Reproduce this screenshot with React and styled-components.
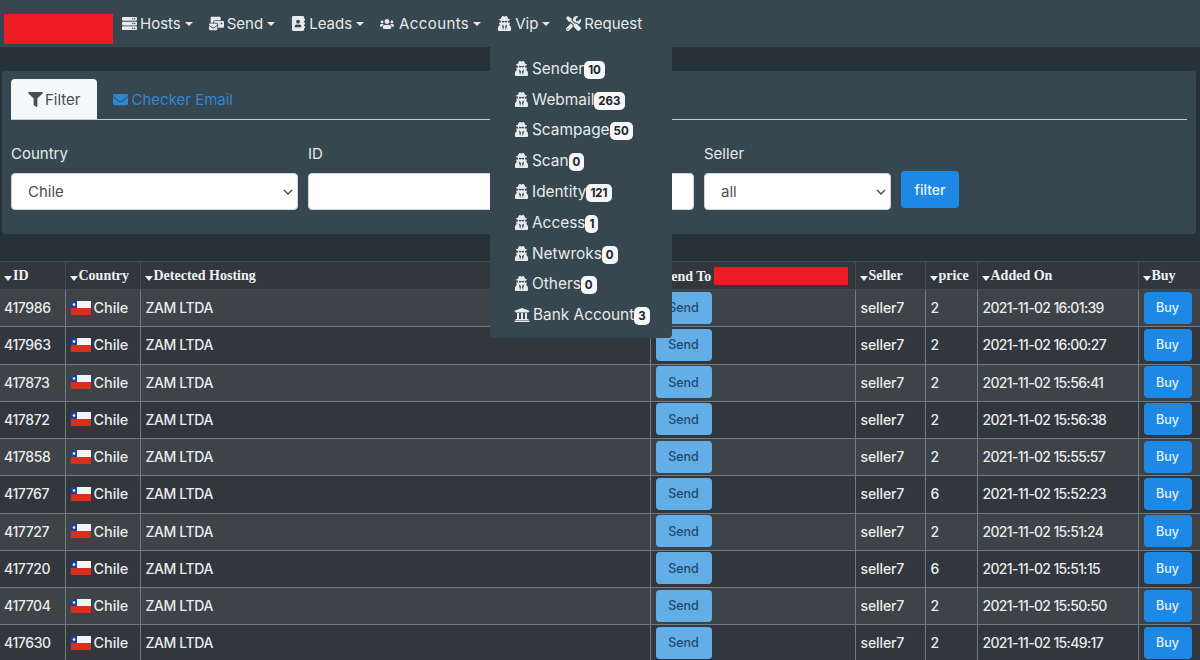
import styled, { createGlobalStyle } from 'styled-components';
import {
  FaServer, FaMailBulk, FaAddressBook, FaUsers, FaUserSecret, FaTools,
  FaFilter, FaEnvelope, FaUniversity,
} from 'react-icons/fa';

const GlobalStyle = createGlobalStyle`
  html, body {
    margin: 0;
    height: 660px;
    overflow: hidden;
    background: #263238;
    font-family: "Inter", "Open Sans", sans-serif;
  }
  * { box-sizing: border-box; }
`;

const Page = styled.div`
  position: relative;
  width: 1200px;
  height: 660px;
  overflow: hidden;
  color: #eef1f2;
`;

const Navbar = styled.nav`
  display: flex;
  align-items: center;
  height: 47px;
  padding: 0 0 0 4px;
  background: #37474f;
`;

const Logo = styled.div`
  width: 109px;
  height: 30px;
  margin: 11px 9px 0 0;
  background: #ed1c24;
`;

const NavItem = styled.a`
  display: flex;
  align-items: center;
  gap: 3px;
  margin-right: 16px;
  font-size: 15px;
  letter-spacing: ${(p) => p.$spacing || 0};
  color: #e6eaec;
  svg { height: 15px; width: auto; }
`;

const UsersIcon = styled(FaUsers)`
  && { height: 14px; margin-right: 2px; }
`;

const Caret = styled.span`
  width: 0;
  height: 0;
  margin-left: 1px;
  border-top: 4px solid #e6eaec;
  border-left: 4px solid transparent;
  border-right: 4px solid transparent;
`;

const Menu = styled.div`
  position: absolute;
  top: 46px;
  left: 490px;
  width: 182px;
  height: 292px;
  padding: 7px 0 0 24px;
  background: #37474f;
  border-radius: 0 0 4px 4px;
  z-index: 5;
`;

const MenuItem = styled.div`
  display: flex;
  align-items: center;
  height: 30.8px;
  font-size: 15.4px;
  color: #e6eaec;
  svg { height: 15px; width: auto; margin-right: 3px; }
`;

const BankIcon = styled(FaUniversity)`
  && { height: 16px; margin-right: 3px; }
`;

const Badge = styled.span`
  display: inline-block;
  margin-top: 3px;
  padding: 3px 4px;
  background: #f4f6f7;
  color: #1d2327;
  border-radius: 5px;
  font-size: 11.5px;
  font-weight: 700;
  line-height: 12px;
`;

const Card = styled.section`
  height: 163px;
  margin: 24px 4px 0 2px;
  padding: 8px 9px;
  background: #37474f;
  border-radius: 3px;
`;

const Tabs = styled.div`
  display: flex;
  height: 41px;
  border-bottom: 1px solid #c5ccd0;
`;

const Tab = styled.div`
  display: flex;
  align-items: center;
  gap: ${(p) => (p.$active ? 2 : 4)}px;
  height: 40px;
  padding: ${(p) => (p.$active ? '0 16px 0 17px' : '0 16px')};
  font-size: 15px;
  border-radius: 4px 4px 0 0;
  background: ${(p) => (p.$active ? '#f5f7f8' : 'transparent')};
  color: ${(p) => (p.$active ? '#454f54' : '#2f86d6')};
`;

const FilterRow = styled.form`
  display: flex;
  align-items: flex-end;
  gap: 10px;
  margin-top: 25px;
`;

const Field = styled.div`
  display: flex;
  flex-direction: column;
  gap: 10px;
  width: ${(p) => p.$width}px;
`;

const Label = styled.label`
  font-size: 15px;
  line-height: 18px;
  color: #e6eaec;
`;

const Select = styled.select`
  height: 37px;
  padding-left: 16px;
  appearance: none;
  font: inherit;
  font-size: 15px;
  color: #495057;
  background: #fff url("data:image/svg+xml,%3Csvg xmlns='http://www.w3.org/2000/svg' width='10' height='6'%3E%3Cpath d='M1 1l4 4 4-4' fill='none' stroke='%23444' stroke-width='1.3'/%3E%3C/svg%3E") no-repeat right 4px center;
  border: 1px solid #ced4da;
  border-radius: 4px;
`;

const Input = styled.input`
  height: 37px;
  background: #fff;
  border: 1px solid #ced4da;
  border-radius: 4px;
`;

const FilterButton = styled.button`
  width: 58px;
  height: 37px;
  margin: 0 0 2px 0;
  font: inherit;
  font-size: 14px;
  font-weight: 500;
  color: #e8f3fc;
  background: #1e88e5;
  border: none;
  border-radius: 4px;
`;

const Table = styled.table`
  width: 1200px;
  margin-top: 27px;
  table-layout: fixed;
  border-collapse: collapse;
`;

const Th = styled.th`
  height: 28px;
  padding: 0 0 0 4px;
  text-align: left;
  white-space: nowrap;
  overflow: hidden;
  font-family: "Liberation Serif", serif;
  font-size: 14px;
  font-weight: 700;
  color: #eef1f2;
  background: #31373d;
  border: 1px solid #454c52;
  border-left-width: ${(p) => (p.$first ? 0 : 1)}px;
`;

const SortCaret = styled.span`
  display: inline-block;
  width: 0;
  height: 0;
  margin-right: 1px;
  vertical-align: -1px;
  border-top: 5px solid #eef1f2;
  border-left: 4px solid transparent;
  border-right: 4px solid transparent;
`;

const Redacted = styled.span`
  display: inline-block;
  width: 134px;
  height: 18px;
  margin-left: 3px;
  vertical-align: -4px;
  background: #ed1c24;
`;

const Row = styled.tr`
  height: 37.25px;
  background: ${(p) => (p.$odd ? '#3d4347' : '#32373d')};
`;

const Td = styled.td`
  padding: 0 0 1px ${(p) => p.$pad || 5}px;
  font-size: 14px;
  font-weight: 500;
  letter-spacing: ${(p) => p.$spacing || '-0.1px'};
  white-space: nowrap;
  color: #e9ecee;
  border: 1px solid #737c82;
  border-left-width: ${(p) => (p.$first ? 0 : 1)}px;
`;

const CountryCell = styled.span`
  display: flex;
  align-items: center;
  gap: 3px;
  font-size: 14.5px;
`;

const ActionButton = styled.button`
  display: block;
  height: 32px;
  font: inherit;
  font-size: 12.5px;
  letter-spacing: 0;
  border: none;
  border-radius: 4px;
  width: ${(p) => (p.$buy ? 48 : 56)}px;
  background: ${(p) => (p.$buy ? '#1e88e5' : '#64aee8')};
  color: ${(p) => (p.$buy ? '#e8f3fc' : '#234a6b')};
`;

const columns = [65, 75, 510, 205, 70, 52, 161, 62];

const headers = ['ID', 'Country', 'Detected Hosting', 'Send To', 'Seller', 'price', 'Added On', 'Buy'];

const rows = [
  ['417986', '2', '2021-11-02 16:01:39'],
  ['417963', '2', '2021-11-02 16:00:27'],
  ['417873', '2', '2021-11-02 15:56:41'],
  ['417872', '2', '2021-11-02 15:56:38'],
  ['417858', '2', '2021-11-02 15:55:57'],
  ['417767', '6', '2021-11-02 15:52:23'],
  ['417727', '2', '2021-11-02 15:51:24'],
  ['417720', '6', '2021-11-02 15:51:15'],
  ['417704', '2', '2021-11-02 15:50:50'],
  ['417630', '2', '2021-11-02 15:49:17'],
];

const vipItems = [
  ['Sender', 10], ['Webmail', 263], ['Scampage', 50], ['Scan', 0],
  ['Identity', 121], ['Access', 1], ['Netwroks', 0], ['Others', 0],
];

function ChileFlag() {
  return (
    <svg width="20" height="14" viewBox="0 0 20 14">
      <rect width="20" height="7" fill="#f5f5f5" />
      <rect y="7" width="20" height="7" fill="#d8301e" />
      <rect width="6" height="7" fill="#1d3f9e" />
      <circle cx="3" cy="3.5" r="1.3" fill="#fff" />
    </svg>
  );
}

function App() {
  return (
    <Page>
      <GlobalStyle />
      <Navbar>
        <Logo />
        <NavItem><FaServer />Hosts<Caret /></NavItem>
        <NavItem><FaMailBulk />Send<Caret /></NavItem>
        <NavItem><FaAddressBook />Leads<Caret /></NavItem>
        <NavItem $spacing="0.4px"><UsersIcon />Accounts<Caret /></NavItem>
        <NavItem><FaUserSecret />Vip<Caret /></NavItem>
        <NavItem><FaTools />Request</NavItem>
      </Navbar>

      <Menu>
        {vipItems.map(([name, count]) => (
          <MenuItem key={name}><FaUserSecret />{name}<Badge>{count}</Badge></MenuItem>
        ))}
        <MenuItem><BankIcon />Bank Account<Badge>3</Badge></MenuItem>
      </Menu>

      <Card>
        <Tabs>
          <Tab $active><FaFilter />Filter</Tab>
          <Tab><FaEnvelope />Checker Email</Tab>
        </Tabs>
        <FilterRow>
          <Field $width={287}>
            <Label>Country</Label>
            <Select defaultValue="Chile"><option>Chile</option></Select>
          </Field>
          <Field $width={386}>
            <Label>ID</Label>
            <Input />
          </Field>
          <Field $width={187}>
            <Label>Seller</Label>
            <Select defaultValue="all"><option>all</option></Select>
          </Field>
          <FilterButton type="button">filter</FilterButton>
        </FilterRow>
      </Card>

      <Table>
        <colgroup>
          {columns.map((w, i) => <col key={i} width={w} />)}
        </colgroup>
        <thead>
          <tr>
            {headers.map((h, i) => (
              <Th key={h} $first={i === 0}>
                <SortCaret />{h}{h === 'Send To' && <Redacted />}
              </Th>
            ))}
          </tr>
        </thead>
        <tbody>
          {rows.map(([id, price, added], i) => (
            <Row key={id} $odd={i % 2 === 0}>
              <Td $first $pad={4} $spacing="-0.4px">{id}</Td>
              <Td><CountryCell><ChileFlag />Chile</CountryCell></Td>
              <Td $spacing="-0.4px">ZAM LTDA</Td>
              <Td><ActionButton>Send</ActionButton></Td>
              <Td>seller7</Td>
              <Td>{price}</Td>
              <Td $spacing="-0.65px">{added}</Td>
              <Td><ActionButton $buy>Buy</ActionButton></Td>
            </Row>
          ))}
        </tbody>
      </Table>
    </Page>
  );
}

export default App;
